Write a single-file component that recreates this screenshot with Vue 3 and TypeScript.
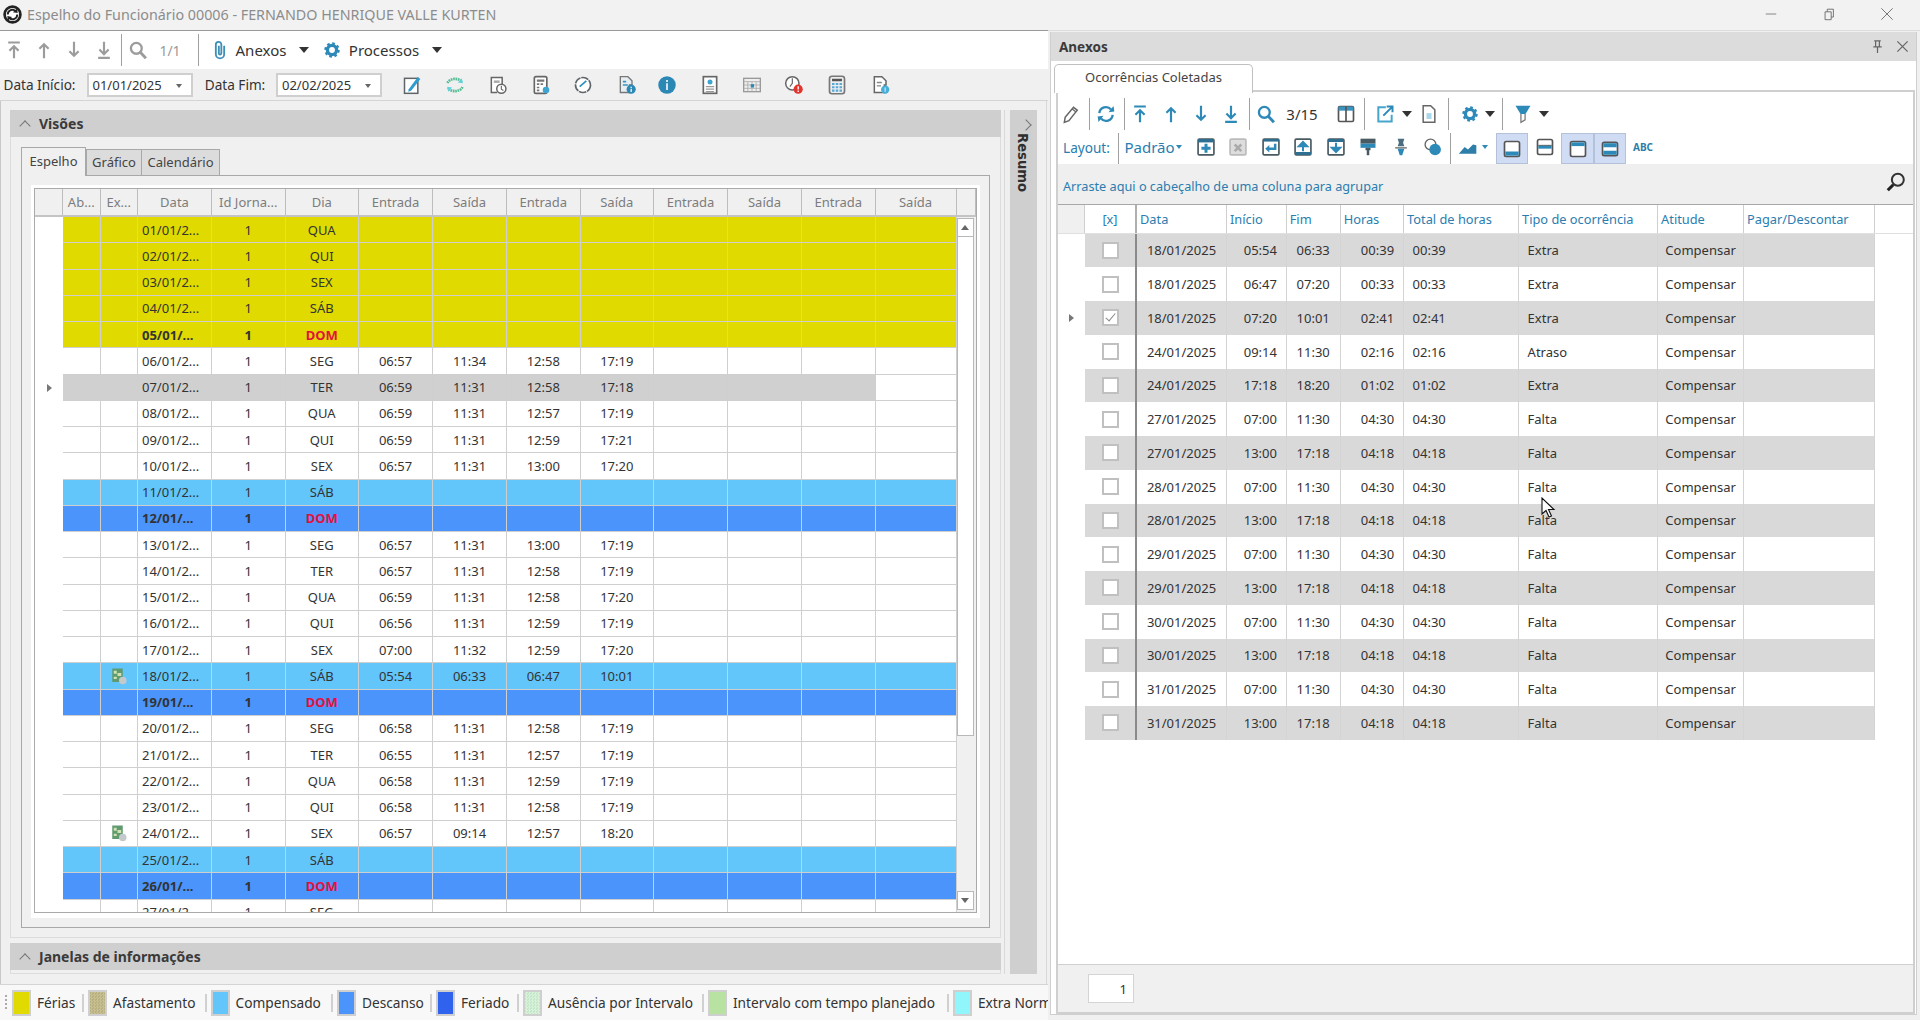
<script setup lang="ts">
interface Tool { x: number; w: number; id?: string; text?: string; cls?: string }

// posiciona os itens da barra pelo centro (x) usando margem entre vizinhos
function flow(items: Tool[], origin: number) {
  let right = origin
  return items.map((t) => {
    const ml = t.x - t.w / 2 - right
    right = t.x + t.w / 2
    return { ...t, ml }
  })
}
const ic = (id: string, x: number, cls = '', w = 22): Tool => ({ id, x, cls, w })
const sep = (x: number): Tool => ({ x, w: 1, cls: 'sep' })
const caret = (x: number): Tool => ({ x, w: 12, cls: 'caret' })
const txt = (text: string, x: number, w: number, cls = ''): Tool => ({ text, x, w, cls })

const mainBar = flow([
  ic('top', 14, 'g'), ic('up', 44, 'g'), ic('down', 73.5, 'g'), ic('bottom', 104, 'g'), sep(121.5),
  ic('search', 138, 'g'), txt('1/1', 170, 30, 'mute'), sep(198), ic('clip', 220),
  txt('Anexos', 261, 54, 'big'), caret(304), ic('gear', 332, 'b'), txt('Processos', 384, 74, 'big'), caret(437),
], 0)

const dateBar = flow([
  txt('Data Início:', 39.5, 74, 'lbl'), txt('01/01/2025', 139.5, 106, 'date'),
  txt('Data Fim:', 235, 64, 'lbl'), txt('02/02/2025', 329, 106, 'date'),
  ic('edit', 412), ic('sync', 455), ic('clockdoc', 498), ic('calc', 541), ic('clock', 583), ic('docinfo', 627),
  ic('info', 667), ic('card', 710), ic('sched', 752), ic('clockalert', 794), ic('calcb', 837), ic('docb', 881),
], 0)

const ocorrBar = flow([
  ic('pencil', 1070), sep(1088), ic('refresh', 1105, 'b'), sep(1123), ic('top', 1139, 'b'), ic('up', 1170, 'b'),
  ic('down', 1200, 'b'), ic('bottom', 1230, 'b'), sep(1248), ic('search', 1265, 'b'), txt('3/15', 1301, 36, 'big'),
  ic('cols', 1345), sep(1363), ic('export', 1384), caret(1406), ic('docx', 1428), sep(1447),
  ic('gear', 1469, 'b'), caret(1489), sep(1501), ic('filter', 1522), caret(1543),
], 1057)

const layoutBar = flow([
  txt('Layout:', 1085.5, 50, 'link lbl'), sep(1117), txt('Padrão', 1148.5, 46, 'link big'), { x: 1178, w: 10, cls: 'caret mini' },
  ic('plusbox', 1205), ic('xbox', 1237), ic('enterbox', 1270), ic('upbox', 1302), ic('downbox', 1335),
  ic('brush', 1367), ic('pin', 1400), ic('circles', 1432), sep(1449), ic('area', 1467), { x: 1484, w: 10, cls: 'caret mini' },
  ic('v1', 1511, 'on', 32), ic('v2', 1544, '', 32), ic('v3', 1576.5, 'on', 33), ic('v4', 1609, 'on', 32),
  txt('ABC', 1642, 24, 'abc'),
], 1057)

const hoursCols = ['Entrada', 'Saída', 'Entrada', 'Saída', 'Entrada', 'Saída', 'Entrada', 'Saída']

type Day = [string, string, string, string[]]
const t = (s: string) => s.split(' ')
const days: Day[] = [
  ['01', 'QUA', 'y', []], ['02', 'QUI', 'y', []], ['03', 'SEX', 'y', []], ['04', 'SÁB', 'y', []], ['05', 'DOM', 'y', []],
  ['06', 'SEG', '', t('06:57 11:34 12:58 17:19')], ['07', 'TER', 'g', t('06:59 11:31 12:58 17:18')],
  ['08', 'QUA', '', t('06:59 11:31 12:57 17:19')], ['09', 'QUI', '', t('06:59 11:31 12:59 17:21')],
  ['10', 'SEX', '', t('06:57 11:31 13:00 17:20')], ['11', 'SÁB', 'l', []], ['12', 'DOM', 'd', []],
  ['13', 'SEG', '', t('06:57 11:31 13:00 17:19')], ['14', 'TER', '', t('06:57 11:31 12:58 17:19')],
  ['15', 'QUA', '', t('06:59 11:31 12:58 17:20')], ['16', 'QUI', '', t('06:56 11:31 12:59 17:19')],
  ['17', 'SEX', '', t('07:00 11:32 12:59 17:20')], ['18', 'SÁB', 'l', t('05:54 06:33 06:47 10:01')], ['19', 'DOM', 'd', []],
  ['20', 'SEG', '', t('06:58 11:31 12:58 17:19')], ['21', 'TER', '', t('06:55 11:31 12:57 17:19')],
  ['22', 'QUA', '', t('06:58 11:31 12:59 17:19')], ['23', 'QUI', '', t('06:58 11:31 12:58 17:19')],
  ['24', 'SEX', '', t('06:57 09:14 12:57 18:20')], ['25', 'SÁB', 'l', []], ['26', 'DOM', 'd', []], ['27', 'SEG', '', []],
]
const hasTag = (d: string) => d === '18' || d === '24'

const occCols = ['Data', 'Início', 'Fim', 'Horas', 'Total de horas', 'Tipo de ocorrência', 'Atitude', 'Pagar/Descontar']
const occ = [
  '18 05:54 06:33 00:39 Extra', '18 06:47 07:20 00:33 Extra', '18 07:20 10:01 02:41 Extra',
  '24 09:14 11:30 02:16 Atraso', '24 17:18 18:20 01:02 Extra',
  '27 07:00 11:30 04:30 Falta', '27 13:00 17:18 04:18 Falta', '28 07:00 11:30 04:30 Falta', '28 13:00 17:18 04:18 Falta',
  '29 07:00 11:30 04:30 Falta', '29 13:00 17:18 04:18 Falta', '30 07:00 11:30 04:30 Falta', '30 13:00 17:18 04:18 Falta',
  '31 07:00 11:30 04:30 Falta', '31 13:00 17:18 04:18 Falta',
].map((s) => s.split(' '))

const dither = (a: string, b: string) => `repeating-conic-gradient(${a} 0 25%, ${b} 0 50%) 0 0 / 3px 3px`
const legend = [
  ['Férias', '#e0da00'], ['Afastamento', dither('#c8bf90', '#b8af82')], ['Compensado', '#62c6fb'], ['Descanso', '#4a94fb'],
  ['Feriado', '#2f63ee'], ['Ausência por Intervalo', dither('#d8f2d6', '#c4e6cf')], ['Intervalo com tempo planejado', '#b8e2a2'], ['Extra Normal', '#90f6fb'],
]
</script>

<template>
  <div class="app">
    <svg class="defs" aria-hidden="true">
      <symbol id="top" viewBox="0 0 24 24"><path d="M5 3h14M12 22V8M6.500 13 12 7.500 17.500 13" fill="none" stroke="currentColor" stroke-width="2.600"/></symbol>
      <symbol id="up" viewBox="0 0 24 24"><path d="M12 22V5M6.500 10.500 12 5l5.500 5.500" fill="none" stroke="currentColor" stroke-width="2.600"/></symbol>
      <symbol id="down" viewBox="0 0 24 24"><path d="M12 2v17M6.500 13.500 12 19l5.500-5.500" fill="none" stroke="currentColor" stroke-width="2.600"/></symbol>
      <symbol id="bottom" viewBox="0 0 24 24"><path d="M12 2v15M6.500 11.500 12 17l5.500-5.500M5 21.500h14" fill="none" stroke="currentColor" stroke-width="2.600"/></symbol>
      <symbol id="search" viewBox="0 0 24 24"><circle cx="10" cy="10" r="6.500" fill="none" stroke="currentColor" stroke-width="2.800"/><path d="m15 15 6.500 7" stroke="currentColor" stroke-width="3.400"/></symbol>
      <symbol id="clip" viewBox="0 0 24 24"><path d="M17 7v10a5 5 0 0 1-10 0V5.500a3.300 3.300 0 0 1 6.600 0V16a1.500 1.500 0 0 1-3 0V7" fill="none" stroke="#3e8fb6" stroke-width="2.200"/></symbol>
      <symbol id="gear" viewBox="0 0 24 24"><circle cx="12" cy="12" r="5.500" fill="none" stroke="currentColor" stroke-width="4"/><circle cx="12" cy="12" r="8" fill="none" stroke="currentColor" stroke-width="2.600" stroke-dasharray="3.200 3.080"/></symbol>
      <symbol id="edit" viewBox="0 0 24 24"><rect x="3" y="4" width="16" height="18" fill="#fff" stroke="#5e6468" stroke-width="1.800"/><path d="M8 17 19 2.500l3 2.300L11 19l-3.500 1z" fill="#2f9bd0"/></symbol>
      <symbol id="sync" viewBox="0 0 24 24"><path d="M3 9.500a9.500 7 0 0 1 17.500-1M21 14.500a9.500 7 0 0 1-17.500 1" fill="none" stroke="#56bd95" stroke-width="3.200" stroke-dasharray="2 .8"/><path d="m20 4 1.500 6-6-1zM4 20l-1.500-6 6 1z" fill="#5cd3dc"/></symbol>
      <symbol id="clockdoc" viewBox="0 0 24 24"><path d="M17 11V3H4v18h7" fill="#fff" stroke="#666" stroke-width="1.800"/><path d="M7 6.500h7v3H7z" fill="#aaa"/><circle cx="16" cy="16.500" r="5.500" fill="#fff" stroke="#666" stroke-width="1.800"/><path d="M16 13v4l2.500 1.500" fill="none" stroke="#666" stroke-width="1.300"/></symbol>
      <symbol id="calc" viewBox="0 0 24 24"><rect x="4" y="2" width="15" height="20" rx="2" fill="#fff" stroke="#666" stroke-width="2"/><path d="M7 5.500h9v2.500H7zM7 10h3v2H7zm4.500 0h3v2h-3zM7 14h3v2H7zm0 3.500h3v2H7z" fill="#777"/><circle cx="18" cy="18" r="4" fill="#3ea5d0"/></symbol>
      <symbol id="clock" viewBox="0 0 24 24"><circle cx="12" cy="12" r="9" fill="#fff" stroke="#5e6468" stroke-width="2" stroke-dasharray="9 1"/><path d="m8 14 8-7" stroke="#2f8fbf" stroke-width="2"/></symbol>
      <symbol id="docinfo" viewBox="0 0 24 24"><path d="M4 2h9l5 5v5h-3v9H4z" fill="#e6eef3" stroke="#777" stroke-width="1.600"/><path d="M7 7h4v2H7zm0 4h6v2H7z" fill="#3b93bf"/><circle cx="17" cy="17" r="5.500" fill="#2b88b5"/><path d="M17 14v1.500m0 1v4" stroke="#fff" stroke-width="1.500"/></symbol>
      <symbol id="info" viewBox="0 0 24 24"><circle cx="12" cy="12" r="10.500" fill="#2b88b5"/><path d="M12 6v2.500m0 1.500v8" stroke="#cfe6f2" stroke-width="2.400"/></symbol>
      <symbol id="card" viewBox="0 0 24 24"><rect x="4" y="2" width="16" height="20" fill="#fff" stroke="#666" stroke-width="2"/><circle cx="12" cy="8.500" r="3" fill="#3ea5d0"/><path d="M7 14h10M7 17h10M7 20h10" stroke="#999" stroke-width="1.400"/></symbol>
      <symbol id="sched" viewBox="0 0 24 24"><rect x="2" y="4" width="20" height="16" fill="#eee" stroke="#999" stroke-width="1.600"/><path d="M2 8h20M7 8v12M12 8v12M17 8v12M2 12h20M2 16h20" stroke="#aaa"/><rect x="10.500" y="11" width="4" height="4" fill="#2b88b5"/></symbol>
      <symbol id="clockalert" viewBox="0 0 24 24"><circle cx="10" cy="10" r="8" fill="#fff" stroke="#666" stroke-width="1.800"/><path d="M10 4v6l-3 4" fill="none" stroke="#666" stroke-width="1.400"/><circle cx="17" cy="17" r="5.500" fill="#e0342c"/><path d="M17 13.500v4m0 1v2" stroke="#fff" stroke-width="1.600"/></symbol>
      <symbol id="calcb" viewBox="0 0 24 24"><rect x="3" y="1.500" width="18" height="21" rx="3" fill="#eee" stroke="#777" stroke-width="2"/><path d="M6 4.500h12v3H6z" fill="#555"/><path d="M6 9.500h3v2.500H6zm4.500 0h3v2.500h-3zm4.500 0h3v2.500h-3zM6 13.500h3V16H6zm4.500 0h3V16h-3zm4.500 0h3V16h-3zM6 17.500h3V20H6zm4.500 0h3V20h-3zm4.500 0h3V20h-3z" fill="#55a9d6"/></symbol>
      <symbol id="docb" viewBox="0 0 24 24"><path d="M4 2h9l5 5v5h-2v9H4z" fill="#fff" stroke="#666" stroke-width="1.800"/><path d="M7 9h6M7 13h5" stroke="#888" stroke-width="1.600"/><circle cx="17" cy="17.500" r="5" fill="#45aeda"/><path d="M17 15v5" stroke="#cfe6f2" stroke-width="1.500"/></symbol>
      <symbol id="pencil" viewBox="0 0 24 24"><path d="m5 16 10-12 4.500 3.500-10 12.500-5.500 2z" fill="#fff" stroke="#666" stroke-width="1.800"/><path d="m13.500 6 4.500 3.500" stroke="#666" stroke-width="1.500"/></symbol>
      <symbol id="refresh" viewBox="0 0 24 24"><path d="M4 11a8 8 0 0 1 14-4.500M20 13a8 8 0 0 1-14 4.500" fill="none" stroke="#2d89b8" stroke-width="2.800"/><path d="m15 10 7-1-1-6.500zM9 14l-7 1 1 6.500z" fill="#2d89b8"/></symbol>
      <symbol id="cols" viewBox="0 0 24 24"><rect x="3" y="3" width="18" height="18" rx="1.500" fill="#fff" stroke="#555" stroke-width="2"/><path d="M3 3h18v5H3z" fill="#3b93bf"/><path d="M12 3v18" stroke="#555" stroke-width="2"/></symbol>
      <symbol id="export" viewBox="0 0 24 24"><path d="M13 4H4v17h16v-8" fill="none" stroke="#45a5cc" stroke-width="2.400"/><path d="M10 14 20 4M14 3h7v7" fill="none" stroke="#2d89b8" stroke-width="2.400"/></symbol>
      <symbol id="docx" viewBox="0 0 24 24"><path d="M5 2h9l5 5v15H5z" fill="#fff" stroke="#666" stroke-width="1.800"/><rect x="9" y="11" width="6" height="7" fill="#a9d6ea"/></symbol>
      <symbol id="filter" viewBox="0 0 24 24"><path d="M3 2h18l-6 10H9z" fill="#2d89b8"/><path d="M9.500 12v10l5-3v-7" fill="#fff" stroke="#777" stroke-width="1.500"/></symbol>
      <symbol id="plusbox" viewBox="0 0 24 24"><rect x="2.500" y="2.500" width="19" height="19" rx="1.500" fill="#fff" stroke="#4a5a62" stroke-width="2"/><path d="M2.500 2.500h19v4h-19z" fill="#2d6f92"/><path d="M12 8v11M6.500 13.500h11" stroke="#2d89b8" stroke-width="3.600"/></symbol>
      <symbol id="xbox" viewBox="0 0 24 24"><rect x="2.500" y="2.500" width="19" height="19" rx="1.500" fill="#ddd" stroke="#bbb" stroke-width="2"/><path d="m8 9 8 8m0-8-8 8" stroke="#aaa" stroke-width="3"/></symbol>
      <symbol id="enterbox" viewBox="0 0 24 24"><rect x="2.500" y="2.500" width="19" height="19" rx="1.500" fill="#fff" stroke="#4a5a62" stroke-width="2"/><path d="M2.500 2.500h19v3h-19z" fill="#2d6f92"/><path d="M17 8v6H8" fill="none" stroke="#2d89b8" stroke-width="3"/><path d="m10 9.500-5 4.500 5 4.500z" fill="#2d89b8"/></symbol>
      <symbol id="upbox" viewBox="0 0 24 24"><rect x="2.500" y="2.500" width="19" height="19" rx="1.500" fill="#fff" stroke="#4a5a62" stroke-width="2"/><path d="M2.500 18h19v3.500h-19z" fill="#2d6f92"/><path d="M12 17V9M7 11l5-5 5 5z" fill="#2d89b8" stroke="#2d89b8" stroke-width="2.400"/></symbol>
      <symbol id="downbox" viewBox="0 0 24 24"><rect x="2.500" y="2.500" width="19" height="19" rx="1.500" fill="#fff" stroke="#4a5a62" stroke-width="2"/><path d="M2.500 2.500h19V6h-19z" fill="#2d6f92"/><path d="M12 7v8m-5-2 5 5 5-5z" fill="#2d89b8" stroke="#2d89b8" stroke-width="2.400"/></symbol>
      <symbol id="brush" viewBox="0 0 24 24"><path d="M3 2h18v6H3z" fill="#4a5a62"/><path d="M3 8h18v5H3z" fill="#2d89b8"/><path d="M9 13h6v3h-1.500v6h-3v-6H9z" fill="#4a5a62"/></symbol>
      <symbol id="pin" viewBox="0 0 24 24"><path d="M8 2h8l-1.500 5 1.500 4H8l1.500-4z" fill="#4a6d80"/><path d="M5 12h14v2H5z" fill="#888"/><path d="M8 14h8l-2.500 8h-3z" fill="#2d89b8"/></symbol>
      <symbol id="circles" viewBox="0 0 24 24"><circle cx="9" cy="9" r="6.500" fill="#fff" stroke="#666" stroke-width="1.600"/><circle cx="14.500" cy="15" r="7" fill="#2d89b8"/></symbol>
      <symbol id="area" viewBox="0 0 24 24"><path d="m1 20 7-8 4 3 6-6 4 1v10z" fill="#2d7ea8"/></symbol>
      <symbol id="v1" viewBox="0 0 24 24"><rect x="3" y="3" width="18" height="18" rx="2" fill="#fff" stroke="#555" stroke-width="2"/><path d="M4 15h16v5H4z" fill="#2d89b8"/></symbol>
      <symbol id="v2" viewBox="0 0 24 24"><rect x="3" y="3" width="18" height="18" rx="2" fill="#fff" stroke="#555" stroke-width="2"/><path d="M4 10h16v4H4z" fill="#2d89b8"/><path d="M4 10h16" stroke="#555"/></symbol>
      <symbol id="v3" viewBox="0 0 24 24"><rect x="3" y="3" width="18" height="18" rx="2" fill="#fff" stroke="#555" stroke-width="2"/><path d="M4 4h16v4.500H4z" fill="#2d89b8"/></symbol>
      <symbol id="v4" viewBox="0 0 24 24"><rect x="3" y="4" width="18" height="16" rx="2" fill="#fff" stroke="#555" stroke-width="2"/><path d="M4 5h16v5H4zM4 14h16v5H4z" fill="#2d89b8"/></symbol>
      <symbol id="tag" viewBox="0 0 24 24"><path d="M3 2h14v18H3z" fill="#5f9a70"/><path d="M5 5h4v4H5zm5 3h5v4h-5zM5 13h4v3H5z" fill="#cfe3b0"/><circle cx="17" cy="18" r="5" fill="#c4c9cc"/></symbol>
    </svg>

    <header class="titlebar">
      <svg class="logo" viewBox="0 0 24 24"><circle cx="12" cy="12" r="10" fill="#fff" stroke="#222" stroke-width="3.400"/><path d="M6 12a6 6 0 0 1 10-4.500M18 12a6 6 0 0 1-10 4.500" fill="none" stroke="#222" stroke-width="2.400"/><path d="m18 4 .5 6-6-1zM6 20l-.5-6 6 1z" fill="#222"/></svg>
      <span class="title">Espelho do Funcionário 00006 - FERNANDO HENRIQUE VALLE KURTEN</span>
      <div class="winbtns">
        <svg viewBox="0 0 16 16"><path d="M2 8h12" stroke="#777"/></svg>
        <svg viewBox="0 0 16 16"><path d="M3.500 5.500h7v9h-7zM6 5.500V2.500h7v9h-2.500" fill="none" stroke="#666"/></svg>
        <svg viewBox="0 0 16 16"><path d="m1.500 1.500 13 13m0-13-13 13" stroke="#666"/></svg>
      </div>
    </header>

    <div class="main">
      <section class="left">
        <div class="bar bar-main">
          <span v-for="b in mainBar" :key="b.x" :class="['tool', b.cls]" :style="{ marginLeft: b.ml + 'px', width: b.w + 'px' }">
            <svg v-if="b.id" class="ico"><use :href="'#' + b.id" /></svg>
            <template v-else>{{ b.text }}</template>
          </span>
        </div>
        <div class="bar bar-dates">
          <span v-for="b in dateBar" :key="b.x" :class="['tool', b.cls]" :style="{ marginLeft: b.ml + 'px', width: b.w + 'px' }">
            <svg v-if="b.id" class="ico"><use :href="'#' + b.id" /></svg>
            <template v-else>{{ b.text }}</template>
          </span>
        </div>

        <div class="work">
          <div class="stack">
            <div class="sec-head"><i class="chev"></i>Visões</div>
            <div class="sec-body">
              <div class="tabs">
                <span class="tab active">Espelho</span>
                <span class="tab t2">Gráfico</span>
                <span class="tab t3">Calendário</span>
              </div>
              <div class="tab-pane">
                <div class="frame">
                  <div class="grid">
                    <div class="row head">
                      <span></span><span>Ab...</span><span>Ex...</span><span>Data</span><span>Id Jorna...</span><span>Dia</span>
                      <span v-for="(h, i) in hoursCols" :key="i">{{ h }}</span>
                      <span class="end"></span>
                    </div>
                    <div class="grid-body">
                      <div class="rows">
                        <div v-for="d in days" :key="d[0]" :class="['row', 'day', d[2] && 'k-' + d[2], d[1] === 'DOM' && 'sun']">
                          <span class="ind"><i v-if="d[0] === '07'" class="mark"></i></span>
                          <span></span>
                          <span><svg v-if="hasTag(d[0])" class="tag"><use href="#tag" /></svg></span>
                          <span class="cell-date">{{ d[1] === 'DOM' ? d[0] + '/01/...' : d[0] + '/01/2...' }}</span>
                          <span>1</span>
                          <span class="dia">{{ d[1] }}</span>
                          <span v-for="n in 8" :key="n">{{ d[3][n - 1] }}</span>
                        </div>
                      </div>
                      <div class="scroll">
                        <div class="sb-btn"><i class="tri-up"></i></div>
                        <div class="sb-thumb"></div>
                        <div class="sb-track"></div>
                        <div class="sb-btn"><i class="tri-down"></i></div>
                      </div>
                    </div>
                  </div>
                </div>
              </div>
            </div>
            <div class="sec-head second"><i class="chev"></i>Janelas de informações</div>
            <div class="sec-end"></div>
          </div>
          <aside class="resumo">
            <div class="res-in"><i class="chev-r"></i><span>Resumo</span></div>
          </aside>
        </div>

        <div class="legend">
          <div class="grip"></div>
          <div v-for="l in legend" :key="l[0]" class="leg">
            <i class="swatch" :style="{ background: l[1] }"></i>
            <span>{{ l[0] }}</span>
            <i class="leg-sep"></i>
          </div>
        </div>
      </section>

      <section class="right">
        <div class="dock">
          <div class="dock-head">
            <b>Anexos</b>
            <svg viewBox="0 0 16 16"><path d="M4.500 2h7M6 2v6M10 2v6M3.500 8.500h9M8 9v6" fill="none" stroke="#666" stroke-width="1.300"/></svg>
            <svg viewBox="0 0 16 16"><path d="m2.500 2.500 11 11m0-11-11 11" stroke="#666" stroke-width="1.300"/></svg>
          </div>
          <div class="dock-tabs"><span class="dock-tab">Ocorrências Coletadas</span></div>
          <div class="dock-pane">
            <div class="bar bar-occ">
              <span v-for="b in ocorrBar" :key="b.x" :class="['tool', b.cls]" :style="{ marginLeft: b.ml + 'px', width: b.w + 'px' }">
                <svg v-if="b.id" class="ico"><use :href="'#' + b.id" /></svg>
                <template v-else>{{ b.text }}</template>
              </span>
            </div>
            <div class="bar bar-layout">
              <span v-for="b in layoutBar" :key="b.x" :class="['tool', b.cls]" :style="{ marginLeft: b.ml + 'px', width: b.w + 'px' }">
                <svg v-if="b.id" class="ico"><use :href="'#' + b.id" /></svg>
                <template v-else>{{ b.text }}</template>
              </span>
            </div>
            <div class="group-bar">
              <span>Arraste aqui o cabeçalho de uma coluna para agrupar</span>
              <svg viewBox="0 0 24 24"><circle cx="14" cy="9.500" r="6.500" fill="none" stroke="#333" stroke-width="2.200"/><path d="m9 15-6 6" stroke="#222" stroke-width="3.400"/></svg>
            </div>
            <div class="occ">
              <div class="occ-row occ-head">
                <span class="ind-h"></span><span class="chk-h">[x]</span>
                <span v-for="c in occCols" :key="c">{{ c }}</span>
              </div>
              <div v-for="(r, i) in occ" :key="i" :class="['occ-row', 'occ-data', i % 2 === 0 && 'alt']">
                <span class="ind"><i v-if="i === 2" class="mark"></i></span>
                <span class="chk-c"><i :class="['chk', i === 2 && 'checked']"></i></span>
                <span>{{ r[0] }}/01/2025</span>
                <span class="pl">{{ r[1] }}</span>
                <span>{{ r[2] }}</span>
                <span class="pr">{{ r[3] }}</span>
                <span class="lf">{{ r[3] }}</span>
                <span class="lf">{{ r[4] }}</span>
                <span>Compensar</span>
                <span></span>
              </div>
            </div>
            <div class="pager"><span class="page-box">1</span></div>
          </div>
        </div>
      </section>
    </div>

    <svg class="cursor" viewBox="0 0 15 21"><path d="M1 1v16l4-3.500 3 6.500 2.500-1-3-6.500H13z" fill="#fff" stroke="#111" stroke-width="1.100"/></svg>
  </div>
</template>

<style scoped>
.app {
  position: relative;
  width: 1920px;
  height: 1020px;
  overflow: hidden;
  display: flex;
  flex-direction: column;
  background: #f0f0f0;
  color: #333;
  font-family: "Noto Sans", "Open Sans", sans-serif;
  font-size: 13px;
}
.defs {
  position: absolute;
  width: 0;
  height: 0;
}

/* barra de titulo */
.titlebar {
  height: 30px;
  flex: none;
  box-sizing: border-box;
  display: flex;
  align-items: center;
  padding: 0 0 2px 3px;
  background: #f2f2f2;
}
.logo {
  width: 19px;
  height: 19px;
}
.title {
  margin-left: 5px;
  font-size: 14.300px;
  color: #8c8c8c;
  white-space: nowrap;
}
.winbtns {
  margin-left: auto;
  display: flex;
  gap: 44px;
  padding-right: 26px;
}
.winbtns svg {
  width: 14px;
  height: 14px;
}

.main {
  flex: 1;
  display: flex;
  min-height: 0;
}
.left {
  width: 1048px;
  flex: none;
  display: flex;
  flex-direction: column;
  border-top: 1px solid #999;
  box-sizing: border-box;
}

/* barras de ferramentas */
.bar {
  display: flex;
  align-items: center;
  flex: none;
  white-space: nowrap;
}
.bar-main {
  height: 38px;
  background: #fff;
}
.bar-dates {
  height: 32px;
  box-sizing: border-box;
  border-bottom: 1px solid #d4d4d4;
  background: #f0f0f0;
}
.bar-occ {
  height: 41px;
  box-sizing: border-box;
  padding-top: 3px;
}
.bar-layout {
  height: 31px;
}
.bar-layout .tool {
  padding-bottom: 3px;
}
.tool {
  flex: none;
  display: flex;
  align-items: center;
  justify-content: center;
  box-sizing: border-box;
  color: #333;
}
.ico {
  width: 20px;
  height: 20px;
}
.g {
  color: #9c9c9c;
}
.b {
  color: #2d89b8;
}
.sep {
  height: 32px;
  background: #a0a0a0;
}
.caret::before {
  content: "";
  border: 5px solid transparent;
  border-top: 6px solid #333;
  border-bottom: 0;
}
.caret.mini::before {
  border-width: 4px 3.500px 0;
  border-top-color: #2d89b8;
}
.mute {
  color: #9a9a9a;
  font-size: 14px;
}
.big {
  font-size: 15px;
}
.lbl {
  font-size: 13.600px;
}
.date {
  height: 24px;
  justify-content: flex-start;
  padding-left: 4px;
  background: #fff;
  border: 2px solid #cfcfcf;
  position: relative;
}
.date::after {
  content: "";
  position: absolute;
  right: 9px;
  top: 9px;
  border: 3.500px solid transparent;
  border-top: 4px solid #666;
  border-bottom: 0;
}
.link {
  color: #2a7db0;
}
.bar-layout .on {
  align-self: stretch;
  padding-bottom: 0;
  background: #cfdcf3;
  border: 1px solid #b3c2d8;
}
.abc {
  font-size: 10px;
  font-weight: 700;
  color: #2d7ea8;
}

/* area de trabalho esquerda */
.work {
  flex: 1;
  min-height: 0;
  display: flex;
  padding: 9px 10px 10px;
  border-left: 1px solid #c8c8c8;
  margin-right: 1px;
  box-sizing: border-box;
  border-right: 1px solid #d8d8d8;
}
.stack {
  width: 991px;
  margin-left: -1px;
  flex: none;
  display: flex;
  flex-direction: column;
}
.sec-head {
  height: 27px;
  flex: none;
  display: flex;
  align-items: center;
  background: #cfcfcf;
  font-weight: 700;
  font-size: 14px;
  color: #3a3a3a;
}
.second {
  margin-top: 5px;
}
.chev {
  width: 7px;
  height: 7px;
  margin: 4px 10px 0 11px;
  border-left: 1.500px solid #777;
  border-top: 1.500px solid #777;
  transform: rotate(45deg);
}
.sec-body {
  flex: 1;
  min-height: 0;
  display: flex;
  flex-direction: column;
  padding: 10px 10px 9px;
  border: 1px solid #dcdcdc;
  border-top: 0;
}
.sec-end {
  height: 4px;
  flex: none;
  border: 1px solid #dcdcdc;
  border-top: 0;
  box-sizing: border-box;
}
.tabs {
  display: flex;
  align-items: flex-end;
  height: 28px;
  flex: none;
}
.tab {
  box-sizing: border-box;
  height: 26px;
  display: flex;
  align-items: center;
  justify-content: center;
  padding-bottom: 1px;
  background: #dcdcdc;
  border: 1px solid #a8a8a8;
  border-bottom: 0;
  color: #444;
}
.tab.active {
  width: 65px;
  height: 29px;
  margin-bottom: -1px;
  padding-bottom: 2px;
  background: #f0f0f0;
  position: relative;
}
.t2 {
  width: 56px;
}
.t3 {
  width: 78px;
  border-left: 0;
}
.tab-pane {
  flex: 1;
  min-height: 0;
  border: 1px solid #a8a8a8;
  padding: 9px;
  display: flex;
}
.frame {
  flex: 1;
  min-width: 0;
  background: #fff;
  padding: 3px 3px 5px;
  display: flex;
}
.grid {
  flex: 1;
  min-width: 0;
  border: 1px solid #aaa;
  display: flex;
  flex-direction: column;
  overflow: hidden;
}
.row {
  display: grid;
  grid-template-columns: 28px 37.500px 37.500px 74px 73.500px 73.500px 74px 74px 73.500px 73.500px 74px 74px 73.500px 81px;
  box-sizing: border-box;
}
.row > span {
  display: flex;
  align-items: center;
  justify-content: center;
  box-sizing: border-box;
  border-right: 1px solid #cfcfcf;
  white-space: nowrap;
  overflow: hidden;
}
.row.head {
  grid-template-columns: 28px 37.500px 37.500px 74px 73.500px 73.500px 74px 74px 73.500px 73.500px 74px 74px 73.500px 81px 1fr;
  height: 28px;
  flex: none;
  background: #f0f0f0;
  border-bottom: 2px solid #c4c4c4;
  color: #7c7c7c;
}
.row.head > span {
  border-right-color: #bdbdbd;
}
.grid-body {
  flex: 1;
  min-height: 0;
  display: flex;
  overflow: hidden;
}
.rows {
  width: 921.500px;
  flex: none;
}
.day {
  height: 26.250px;
}
.day > span:not(.ind) {
  border-bottom: 1px solid #cfcfcf;
}
.ind {
  background: #fff;
  border-right: 0 !important;
}
.mark {
  border: 4.500px solid transparent;
  border-left: 5px solid #777;
  border-right: 0;
}
.day .cell-date {
  justify-content: flex-start;
  padding-left: 4px;
}
.k-y > span:not(.ind) {
  background: #e0da00;
}
.k-l > span:not(.ind) {
  background: #62c6fb;
}
.k-d > span:not(.ind) {
  background: #4a94fb;
}
.k-g > span:not(.ind):not(:last-child) {
  background: #d0d0d0;
}
.sun {
  font-weight: 700;
}
.sun .dia {
  color: #e3103c;
}
.tag {
  width: 18px;
  height: 20px;
}
.scroll {
  flex: 1;
  display: flex;
  flex-direction: column;
  background: #f0f0f0;
  padding: 1px 2px 2px 0;
}
.sb-btn {
  height: 19px;
  flex: none;
  background: #fff;
  border: 1px solid #b8b8b8;
  box-sizing: border-box;
  display: flex;
  align-items: center;
  justify-content: center;
}
.tri-up,
.tri-down {
  border: 4px solid transparent;
}
.tri-up {
  border-bottom: 5px solid #666;
  border-top: 0;
}
.tri-down {
  border-top: 5px solid #666;
  border-bottom: 0;
}
.sb-thumb {
  height: 499px;
  flex: none;
  box-sizing: border-box;
  background: #fff;
  border: 1px solid #b8b8b8;
  border-top: 0;
}
.sb-track {
  flex: 1;
}

/* resumo lateral */
.resumo {
  width: 33px;
  margin-left: 3px;
  flex: none;
  background: #efefef;
  border-left: 1px solid #d8d8d8;
  box-sizing: border-box;
  padding-left: 5px;
  display: flex;
}
.res-in {
  flex: 1;
  background: #cfcfcf;
  display: flex;
  flex-direction: column;
  align-items: center;
  font-family: "DejaVu Sans", sans-serif;
  font-weight: 700;
  font-size: 13.200px;
  color: #2f2f2f;
}
.res-in span {
  writing-mode: vertical-rl;
  margin: 4px 2px 0 0;
  line-height: 1;
}
.chev-r {
  width: 7px;
  height: 7px;
  margin: 11px 0 0 4px;
  border-right: 1.500px solid #777;
  border-top: 1.500px solid #777;
  transform: rotate(45deg);
  flex: none;
}

/* legenda */
.legend {
  height: 36px;
  flex: none;
  box-sizing: border-box;
  border-top: 1px solid #d4d4d4;
  background: #f8f8f8;
  display: grid;
  grid-template-columns: 12px 76px 122.600px 126.400px 99px 87px 185px 245px 100px;
  overflow: hidden;
  align-items: center;
  font-size: 13.700px;
}
.grip {
  justify-self: center;
  width: 2px;
  height: 16px;
  background: repeating-linear-gradient(#aaa 0 2px, transparent 2px 4px);
}
.leg {
  display: flex;
  align-items: center;
  white-space: nowrap;
  min-width: 0;
}
.swatch {
  width: 19px;
  height: 26px;
  flex: none;
  box-sizing: border-box;
  border: 2px solid #cfcfcf;
  margin-right: 6px;
}
.leg-sep {
  width: 2px;
  height: 18px;
  margin-left: auto;
  margin-right: 4px;
  flex: none;
  background: #d0d0d0;
}
.leg:last-child .leg-sep {
  display: none;
}

/* painel direito */
.right {
  flex: 1;
  min-width: 0;
  padding: 1px 3px 5px 2px;
  display: flex;
  border-top: 1px solid #ddd;
  box-sizing: border-box;
}
.dock {
  flex: 1;
  min-width: 0;
  display: flex;
  flex-direction: column;
  background: #fff;
  border: 1px solid #cfcfcf;
  border-top: 0;
}
.dock-head {
  height: 29px;
  flex: none;
  display: flex;
  align-items: center;
  background: #dcdcdc;
  padding: 0 6px 0 8px;
  font-size: 13.500px;
}
.dock-head b {
  flex: 1;
  color: #3a3a3a;
}
.dock-head svg {
  width: 15px;
  height: 15px;
  margin-left: 10px;
}
.dock-tabs {
  height: 29px;
  flex: none;
  display: flex;
  align-items: flex-end;
  padding-left: 3px;
  position: relative;
  z-index: 1;
}
.dock-tab {
  width: 199px;
  height: 29px;
  box-sizing: border-box;
  display: flex;
  align-items: center;
  justify-content: center;
  background: #fff;
  border: 1px solid #c0c0c0;
  border-bottom: 0;
  border-radius: 5px 5px 0 0;
  margin-bottom: -3px;
  color: #444;
  font-size: 13px;
  padding-bottom: 4px;
}
.dock-pane {
  flex: 1;
  min-height: 0;
  margin: 0 1px 0 5px;
  border: 2px solid #cfcfcf;
  display: flex;
  flex-direction: column;
}
.group-bar {
  height: 41px;
  flex: none;
  box-sizing: border-box;
  display: flex;
  align-items: center;
  justify-content: space-between;
  padding: 3px 6px 0 5px;
  background: #efefef;
  border-bottom: 1px solid #a8a8a8;
  color: #2a7db0;
  font-size: 12.700px;
}
.group-bar svg {
  width: 22px;
  height: 22px;
  margin-bottom: 7px;
}
.occ {
  flex: 1;
  min-height: 0;
}
.occ-row {
  display: grid;
  grid-template-columns: 27px 52px 90px 59.700px 54px 63.400px 115px 139px 86px 131px 1fr;
}
.occ-head {
  height: 28.500px;
  box-sizing: border-box;
  border-bottom: 1px solid #e0e0e0;
  color: #2a7db0;
  font-size: 12.800px;
}
.occ-head > span {
  display: flex;
  align-items: center;
  padding-left: 3px;
  border-right: 1px solid #cfcfcf;
  white-space: nowrap;
  overflow: hidden;
}
.ind-h {
  background: #f0f0f0;
}
.occ-head .chk-h {
  justify-content: center;
  padding-left: 0;
  border-right: 2px solid #b0b0b0;
}
.occ-data {
  height: 33.760px;
  grid-template-columns: 27px 52px 90px 59.700px 54px 63.400px 115px 139px 86px 131px;
}
.occ-data > span {
  display: flex;
  align-items: center;
  justify-content: center;
  box-sizing: border-box;
  border-right: 1px solid #d4d4d4;
  white-space: nowrap;
}
.occ-data.alt > span:not(.ind) {
  background: #d9d9d9;
}
.occ-data .chk-c {
  border-right: 2px solid #8a8a8a;
}
.chk {
  width: 17px;
  height: 17px;
  box-sizing: border-box;
  background: #fff;
  border: 2px solid #c0c0c0;
  position: relative;
}
.checked::after {
  content: "";
  position: absolute;
  left: 4px;
  top: 0;
  width: 4px;
  height: 9px;
  border: solid #888;
  border-width: 0 1.500px 1.500px 0;
  transform: rotate(40deg);
}
.occ-data .pl {
  padding-left: 8px;
}
.occ-data .pr {
  justify-content: flex-end;
  padding-right: 9px;
}
.occ-data .lf {
  justify-content: flex-start;
  padding-left: 8.500px;
}
.pager {
  height: 48px;
  flex: none;
  box-sizing: border-box;
  background: #f0f0f0;
  border-top: 1px solid #cfcfcf;
  padding: 9px 0 0 30px;
}
.page-box {
  display: flex;
  align-items: center;
  justify-content: flex-end;
  width: 46px;
  height: 29px;
  box-sizing: border-box;
  padding-right: 6px;
  background: #fff;
  border: 1px solid #d4d4d4;
}
.cursor {
  position: absolute;
  left: 1541px;
  top: 497px;
  width: 15px;
  height: 21px;
}
</style>

<style>
html,
body {
  margin: 0;
  overflow: hidden;
}
</style>
